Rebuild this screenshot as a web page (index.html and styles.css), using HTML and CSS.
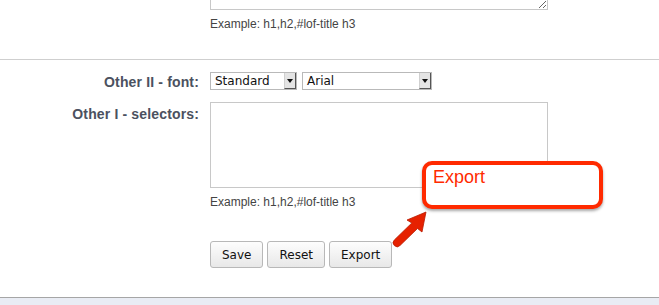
FILE: index.html
```html
<!DOCTYPE html>
<html lang="en">
<head>
    <meta charset="UTF-8">
    <title>Font settings</title>
    <link rel="stylesheet" href="styles.css">
</head>
<body>
    <div id="page">
        <div class="section first">
            <div class="field-col">
                <textarea class="selectors top-area"></textarea>
                <div class="hint">Example: h1,h2,#lof-title h3</div>
            </div>
        </div>
        <div class="section">
            <div class="row">
                <label class="label font-label">Other II - font:</label>
                <div class="field selects">
                    <div class="select small"><span class="val">Standard</span><span class="arrow"></span></div>
                    <div class="select wide"><span class="val">Arial</span><span class="arrow"></span></div>
                </div>
            </div>
            <div class="row second">
                <label class="label sel-label">Other I - selectors:</label>
                <div class="field">
                    <textarea class="selectors"></textarea>
                    <div class="hint">Example: h1,h2,#lof-title h3</div>
                    <div class="buttons">
                        <button class="btn">Save</button>
                        <button class="btn">Reset</button>
                        <button class="btn">Export</button>
                    </div>
                </div>
            </div>
        </div>
        <div id="footer"></div>

        <!-- подсказка поверх формы -->
        <div class="callout">Export</div>
        <svg class="pointer" width="42" height="45" viewBox="0 0 42 45">
            <path d="M36,7 L32,27 L27.5,23.5 L10,40.5 A3.9,3.9 0 0 1 4.3,35 L21.8,18 L17,15 Z" fill="#e62100" stroke="#b81a00" stroke-width="0.8" stroke-linejoin="round"/>
        </svg>
    </div>
</body>
</html>
```

FILE: styles.css
```css
body {
    margin: 0;
    padding: 0;
    background-color: #fff;
    font-family: 'Liberation Sans', Arial, sans-serif;
    color: #444;
}
#page {
    position: relative;
    width: 659px;
    height: 305px;
    overflow: hidden;
    display: flex;
    flex-direction: column;
}
.section {
    padding-bottom: 29px;
}
.section.first {
    padding-bottom: 28px;
    border-bottom: 1px solid #cfcfcf;
}
.field-col {
    margin-left: 210px;
}
.selectors {
    display: block;
    box-sizing: border-box;
    width: 338px;
    height: 86px;
    margin: 0;
    border: 1px solid #c8c8c8;
    background: #fff;
    resize: both;
}
.top-area {
    margin-top: -76px;
}
.hint {
    margin-top: 7px;
    font-size: 12px;
    line-height: 14px;
    color: #444;
}
.row {
    display: flex;
    padding-top: 12px;
}
.row.second {
    padding-top: 11px;
}
.label {
    width: 199px;
    margin-right: 11px;
    text-align: right;
    font-size: 14px;
    font-weight: bold;
    line-height: 18px;
    letter-spacing: 0.15px;
    color: #4b5160;
}
.font-label {
    padding-top: 1px;
}
.sel-label {
    padding-top: 3px;
}
.selects {
    display: flex;
    gap: 5px;
}
.select {
    display: flex;
    box-sizing: border-box;
    height: 18px;
    border: 1px solid #b9b9b9;
    background: #fff;
    font-family: 'DejaVu Sans', Verdana, sans-serif;
    font-size: 12px;
    color: #111;
}
.select.small {
    width: 87px;
}
.select.wide {
    width: 130px;
}
.val {
    flex: 1;
    padding-left: 4px;
    line-height: 16px;
}
.arrow {
    position: relative;
    width: 10px;
    background: #e4e4e4;
    border-left: 1px solid #d0d0d0;
    border-right: 1px solid #555;
    border-bottom: 1px solid #555;
}
.arrow::after {
    content: "";
    position: absolute;
    left: 2px;
    top: 6px;
    border-left: 3px solid transparent;
    border-right: 3px solid transparent;
    border-top: 4px solid #111;
}
.buttons {
    display: flex;
    gap: 4px;
    margin-top: 32px;
}
.btn {
    box-sizing: border-box;
    height: 27px;
    padding: 0 11px;
    border: 1px solid #b8b8b8;
    border-radius: 3px;
    background: linear-gradient(#fdfdfd, #e8e8e8);
    font-family: 'DejaVu Sans', Verdana, sans-serif;
    font-size: 12px;
    color: #111;
}
#footer {
    flex: 1;
    border-top: 1px solid #a6a6a6;
    background-color: #e9ecf4;
}
.callout {
    position: absolute;
    left: 422px;
    top: 161px;
    box-sizing: border-box;
    width: 181px;
    height: 48px;
    padding: 2px 0 0 7px;
    border: 4px solid #ff2a00;
    border-radius: 10px;
    background: #fff;
    box-shadow: 0 2px 3px rgba(0,0,0,0.35);
    font-size: 18px;
    color: #ff2a00;
}
.pointer {
    position: absolute;
    left: 390px;
    top: 205px;
}
```
